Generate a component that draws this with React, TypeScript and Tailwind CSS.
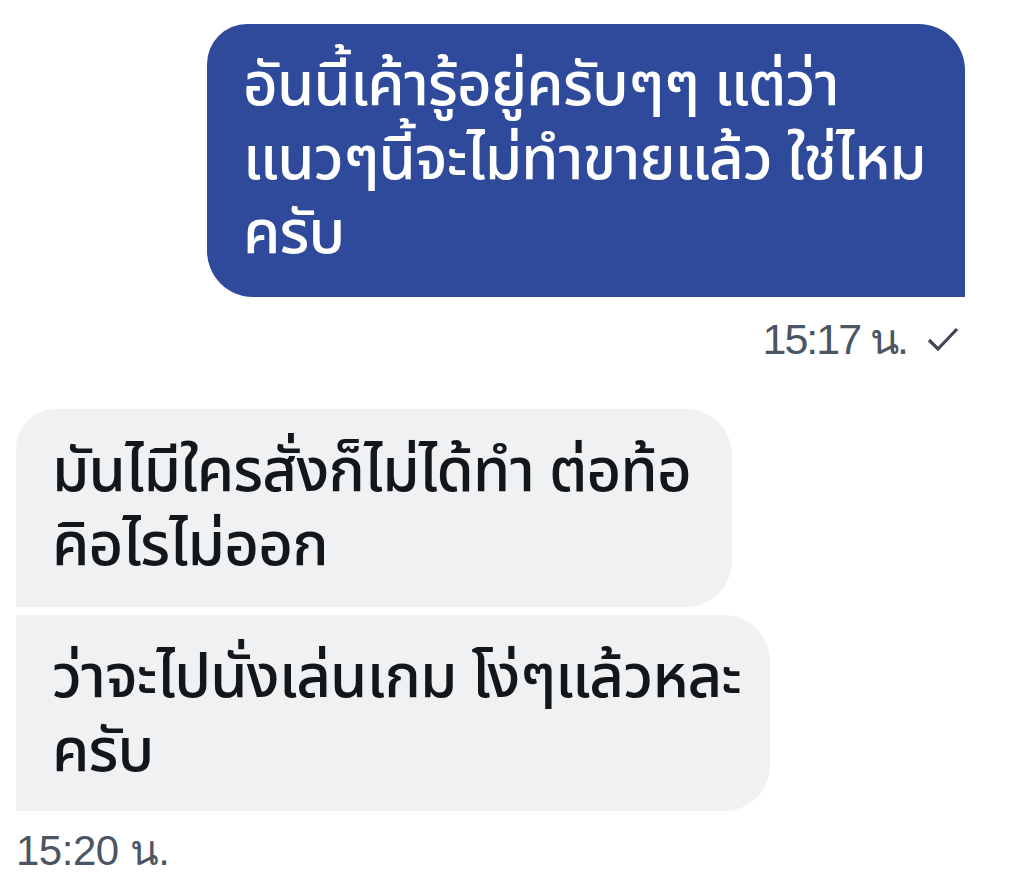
const thai = { fontFamily: '"Noto Sans Thai", "Noto Sans", "DejaVu Sans", sans-serif' };

const Bubble = ({ lines, className }: { lines: string[]; className: string }) => (
  <div className={className} style={thai}>
    {lines.map((l, i) => (
      <div key={i} className="whitespace-nowrap">{l}</div>
    ))}
  </div>
);

export default function App() {
  return (
    <div className="w-[1024px] h-[877px] bg-white overflow-hidden flex flex-col font-['Liberation_Sans',sans-serif]">
      {/* sent */}
      <div className="flex flex-col items-end pr-[59px] pt-[24px]">
        <Bubble
          lines={['อันนี้เค้ารู้อยู่ครับๆๆ แต่ว่า', 'แนวๆนี้จะไม่ทำขายแล้ว ใช่ไหม', 'ครับ']}
          className="w-[758px] h-[273px] bg-[#2f4a9b] text-white text-[60px] tracking-[-0.8px] font-medium leading-[74px] pl-[36px] pt-[26px] rounded-tl-[40px] rounded-tr-[46px] rounded-bl-[46px]"
        />
        <div className="mt-[22px] mr-[6px] flex items-center gap-[20px] text-[43px] tracking-[-2px] leading-[40px] text-[#4b5563]">
          <span>15:17 น.</span>
          <svg width="32" height="28" viewBox="0 0 32 28" fill="none" stroke="#3f4752" strokeWidth="3.2">
            <path d="M2 15 L11 24 L30 4" />
          </svg>
        </div>
      </div>

      {/* received */}
      <div className="flex flex-col items-start pl-[16px] mt-[50px] gap-[8px]">
        <Bubble
          lines={['มันไมีใครสั่งก็ไม่ได้ทำ ต่อท้อ', 'คิอไรไม่ออก']}
          className="w-[716px] h-[198px] bg-[#eff1f3] text-[#14171a] text-[60px] tracking-[-0.8px] font-medium leading-[74px] pl-[36px] pt-[27px] rounded-tl-[40px] rounded-tr-[46px] rounded-br-[46px]"
        />
        <Bubble
          lines={['ว่าจะไปนั่งเล่นเกม โง่ๆแล้วหละ', 'ครับ']}
          className="w-[754px] h-[196px] bg-[#eff1f3] text-[#14171a] text-[60px] tracking-[-0.8px] font-medium leading-[74px] pl-[36px] pt-[27px] rounded-tr-[46px] rounded-br-[46px]"
        />
        <div className="mt-[12px] text-[42px] tracking-[-0.5px] leading-[40px] text-[#4b5563]">15:20 น.</div>
      </div>
    </div>
  );
}
